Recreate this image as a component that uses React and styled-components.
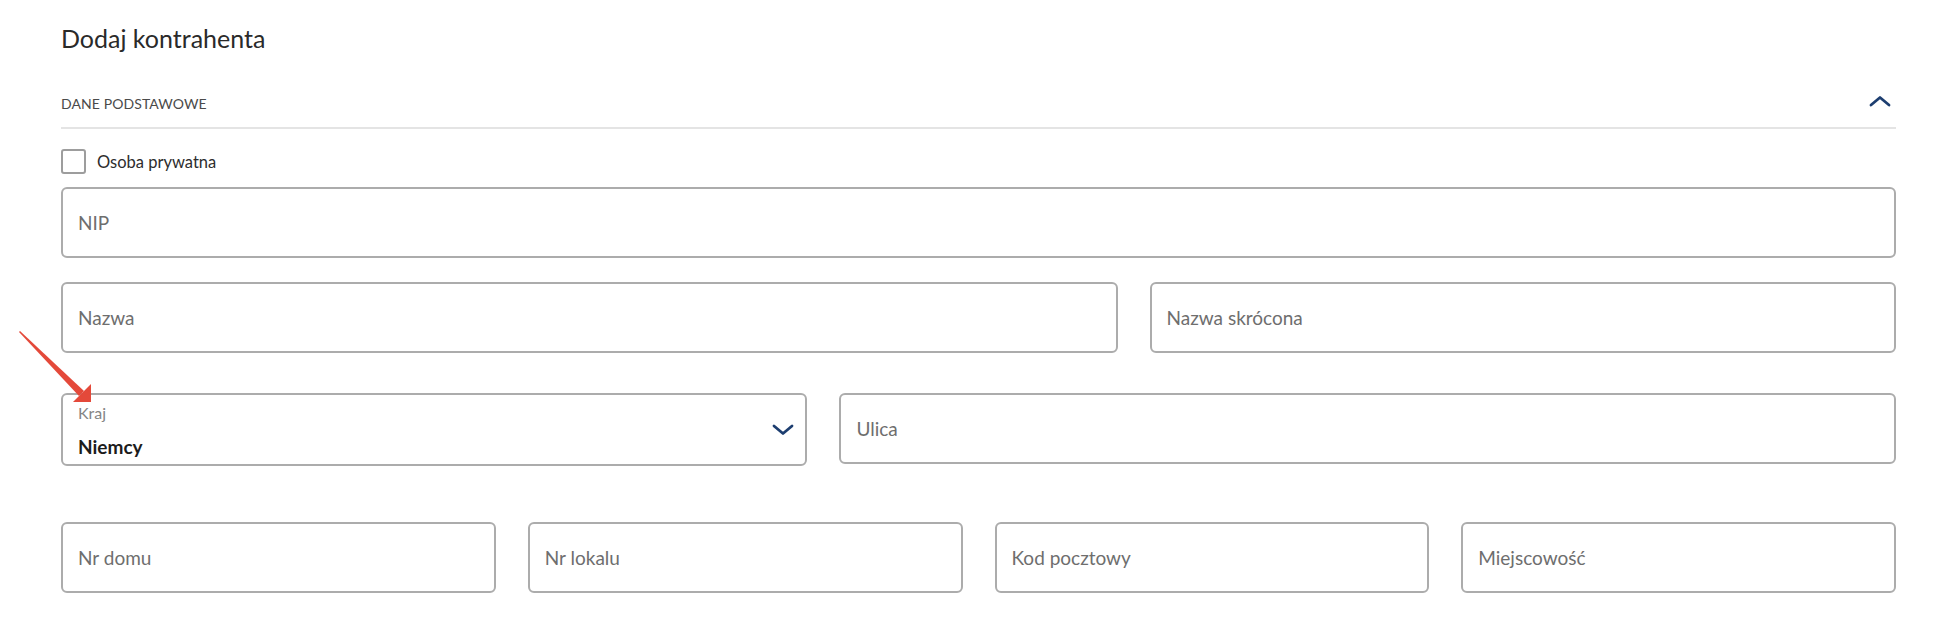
import React from "react";
import styled, { createGlobalStyle } from "styled-components";

const Global = createGlobalStyle`
  * { box-sizing: border-box; }
  html, body { margin: 0; padding: 0; background: #ffffff; }
  body { font-family: Lato, "Open Sans", Arial, sans-serif; color: #2b2b2b; }
`;

const Page = styled.div`
  position: relative;
  width: 1939px;
  height: 624px;
  padding: 23px 43px 0 61px;
  background: #fff;
`;

const Title = styled.h1`
  margin: 0 0 27px;
  font-size: 25px;
  line-height: 30px;
  font-weight: 400;
  color: #2a2a2a;
`;

const SectionHeader = styled.div`
  display: flex;
  align-items: center;
  justify-content: space-between;
  height: 49px;
  padding-right: 5px;
  border-bottom: 2px solid #e4e4e4;
`;

const SectionTitle = styled.span`
  font-size: 14px;
  font-weight: 400;
  letter-spacing: 0.1px;
  color: #4a4a4a;
  text-transform: uppercase;
`;

const IconButton = styled.button`
  display: flex;
  align-items: center;
  justify-content: center;
  padding: 0;
  margin-bottom: ${(p) => p.$lift || 0}px;
  border: 0;
  background: none;
  color: #1d3e70;
  cursor: pointer;
`;

const CheckboxRow = styled.label`
  display: flex;
  align-items: center;
  gap: 11px;
  margin-top: 20px;
  height: 25px;
  font-size: 16.5px;
  color: #2d2d2d;
`;

const Checkbox = styled.span`
  width: 25px;
  height: 25px;
  border: 2px solid #9d9d9d;
  border-radius: 3px;
  background: #fff;
`;

const Row = styled.div`
  display: grid;
  grid-template-columns: ${(p) => p.$cols || "1fr"};
  column-gap: 32px;
  align-items: start;
  margin-top: ${(p) => p.$top}px;
`;

const FieldBox = styled.div`
  display: flex;
  align-items: center;
  height: ${(p) => p.$h || 71}px;
  padding: 0 17px 0 15px;
  border: 2px solid #acacac;
  border-radius: 6px;
  background: #fff;
`;

const Placeholder = styled.span`
  font-size: 19px;
  color: #6e6e6e;
`;

const SelectBox = styled(FieldBox)`
  justify-content: space-between;
  padding-right: 11px;
`;

const SelectValue = styled.div`
  display: flex;
  flex-direction: column;
  padding-top: 2px;
`;

const SelectLabel = styled.span`
  font-size: 16px;
  line-height: 18px;
  color: #858585;
`;

const SelectText = styled.span`
  margin-top: 14px;
  font-size: 19px;
  line-height: 22px;
  font-weight: 700;
  color: #1c1c1c;
`;

const Annotation = styled.svg`
  position: absolute;
  left: 0;
  top: 0;
  pointer-events: none;
`;

const Chevron = ({ up }) => (
  <svg width="22" height="12" viewBox="0 0 22 12" fill="none">
    <path
      d={up ? "M2 10 L11 2.5 L20 10" : "M2 2 L11 9.5 L20 2"}
      stroke="currentColor"
      strokeWidth="2.8"
      strokeLinecap="round"
      strokeLinejoin="round"
    />
  </svg>
);

const Field = ({ label, h }) => (
  <FieldBox $h={h}>
    <Placeholder>{label}</Placeholder>
  </FieldBox>
);

export default function App() {
  return (
    <>
      <Global />
      <Page>
        <Title>Dodaj kontrahenta</Title>
        <SectionHeader>
          <SectionTitle>Dane podstawowe</SectionTitle>
          <IconButton aria-label="Zwiń" $lift={5}>
            <Chevron up />
          </IconButton>
        </SectionHeader>

        <CheckboxRow>
          <Checkbox />
          Osoba prywatna
        </CheckboxRow>

        <Row $top={13}>
          <Field label="NIP" />
        </Row>

        <Row $top={24} $cols="58.6fr 41.4fr">
          <Field label="Nazwa" />
          <Field label="Nazwa skrócona" />
        </Row>

        <Row $top={40} $cols="41.4fr 58.6fr">
          <SelectBox $h={73}>
            <SelectValue>
              <SelectLabel>Kraj</SelectLabel>
              <SelectText>Niemcy</SelectText>
            </SelectValue>
            <IconButton as="span">
              <Chevron />
            </IconButton>
          </SelectBox>
          <Field label="Ulica" h={71} />
        </Row>

        <Row $top={56} $cols="1fr 1fr 1fr 1fr">
          <Field label="Nr domu" />
          <Field label="Nr lokalu" />
          <Field label="Kod pocztowy" />
          <Field label="Miejscowość" />
        </Row>

        <Annotation width="120" height="420" viewBox="0 0 120 420">
          <polygon points="20,331 84,391 79,396 19,332" fill="#e4493a" />
          <polygon points="91,402 91,384 73,402" fill="#e4493a" />
        </Annotation>
      </Page>
    </>
  );
}
